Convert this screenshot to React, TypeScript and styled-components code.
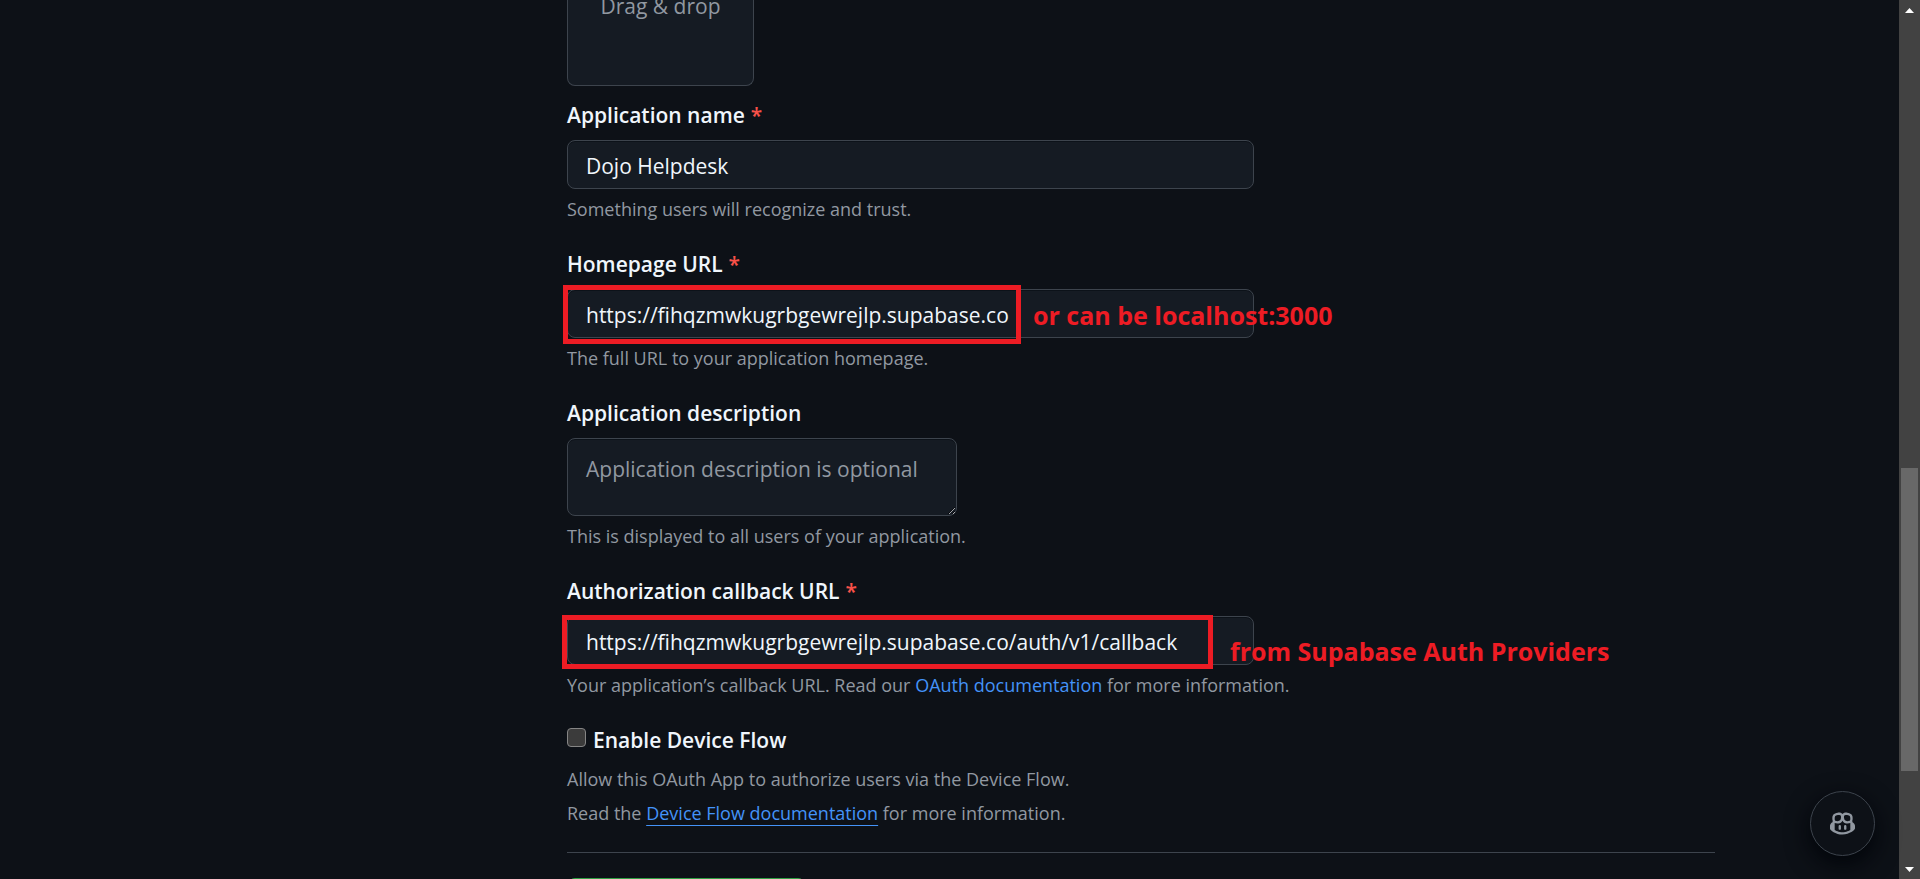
import React from "react";
import styled, { createGlobalStyle, css } from "styled-components";

const GlobalStyle = createGlobalStyle`
  *, *::before, *::after { box-sizing: border-box; }
  html, body { margin: 0; background: #0d1117; }
  body { color: #f0f6fc; font-family: "Open Sans", "Noto Sans", sans-serif; font-size: 21px; }
  input, textarea, button { font: inherit; }
`;

const Page = styled.div`
  display: grid;
  grid-template-columns: minmax(0, 1fr) 21px;
  height: 100vh;
  overflow: hidden;
`;

const Main = styled.main`
  min-width: 0;
  overflow: hidden;
  padding: 0 184px 0 567px;
`;

const DropZone = styled.div`
  width: 187px;
  height: 86px;
  border: 1px solid #3d444d;
  border-top: 0;
  border-radius: 0 0 8px 8px;
  background: #151b23;
  color: #9198a1;
  text-align: center;
  line-height: 12px;
`;

const Form = styled.form`
  display: flex;
  flex-direction: column;
  gap: 28px;
  padding-top: 14px;
`;

const Field = styled.div`
  display: flex;
  flex-direction: column;
  align-items: flex-start;
`;

const Label = styled.label`
  font-weight: 600;
  line-height: 30px;
  margin-bottom: 10px;
`;

const Required = styled.span`
  color: #f85149;
  margin-left: 6px;
`;

const control = css`
  display: block;
  border: 1px solid #3d444d;
  border-radius: 8px;
  background: #151b23;
  color: #f0f6fc;
  outline: none;
  box-shadow: inset 0 1px 0 #01040966;
  padding: 0 18px;
  &::placeholder { color: #9198a1; opacity: 1; }
`;

const ControlRow = styled.div`
  position: relative;
  width: 100%;
  max-width: 687px;
`;

const TextInput = styled.input`
  ${control}
  width: 100%;
  height: 49px;
  padding-top: 2px;
`;

const TextArea = styled.textarea`
  ${control}
  color-scheme: dark;
  width: 390px;
  max-width: 100%;
  height: 78px;
  padding-top: 15px;
  line-height: 30px;
  resize: both;
`;

const Note = styled.p`
  margin: 8px 0 0;
  color: #9198a1;
  font-size: 18px;
  line-height: 24px;
`;

const Link = styled.a<{ $underlined?: boolean }>`
  color: #4493f8;
  text-decoration: ${(p) => (p.$underlined ? "underline" : "none")};
  text-decoration-thickness: 1px;
  text-underline-offset: 5px;
`;

const Highlight = styled.div<{ $left: number; $width: number; $offset: number; $height: number }>`
  position: absolute;
  left: ${(p) => p.$left}px;
  top: ${(p) => p.$offset}px;
  width: ${(p) => p.$width}px;
  height: ${(p) => p.$height}px;
  border: 5px solid #ed1c24;
  pointer-events: none;
`;

const Remark = styled.span<{ $left: number; $top: number }>`
  position: absolute;
  left: ${(p) => p.$left}px;
  top: ${(p) => p.$top}px;
  color: #ed1c24;
  font-size: 25px;
  font-weight: 700;
  line-height: 34px;
  white-space: nowrap;
  pointer-events: none;
`;

const CheckLabel = styled.label`
  display: flex;
  gap: 7px;
  font-weight: 600;
  line-height: 30px;
`;

const Checkbox = styled.input`
  appearance: none;
  width: 19px;
  height: 19px;
  margin: 3px 0 0;
  border: 1px solid #858585;
  border-radius: 4px;
  background: #3b3b3b;
`;

const FlowNote = styled(Note)`
  margin-top: 7px;
  line-height: 34px;
`;

const Divider = styled.hr`
  height: 1px;
  margin: 22px 0 25px;
  border: 0;
  background: #3d444d;
`;

const Submit = styled.button`
  display: block;
  height: 40px;
  padding: 0 18px;
  border: 1px solid #2ea043;
  border-radius: 8px;
  background: #238636;
  color: #ffffff;
  font-weight: 600;
`;

const CopilotButton = styled.button`
  position: fixed;
  right: 45px;
  bottom: 23px;
  display: grid;
  place-items: center;
  width: 65px;
  height: 65px;
  padding: 0;
  border: 1px solid #3d444d;
  border-radius: 50%;
  background: #0d1117;
  color: #9198a1;
  box-shadow: 0 8px 24px #010409;
`;

const ScrollTrack = styled.div`
  display: grid;
  grid-template-rows: 20px minmax(0, 448fr) minmax(0, 303fr) minmax(0, 88fr) 20px;
  justify-items: center;
  align-items: center;
  background: #424242;
`;

const ScrollThumb = styled.div`
  grid-row: 3;
  width: 17px;
  height: 100%;
  background: #686868;
`;

const Arrow = styled.svg<{ $row: number }>`
  grid-row: ${(p) => p.$row};
  display: block;
`;

export default function App() {
  return (
    <>
      <GlobalStyle />
      <Page>
        <Main>
          <DropZone>Drag &amp; drop</DropZone>
          <Form onSubmit={(e) => e.preventDefault()}>
            <Field>
              <Label htmlFor="name">
                Application name<Required>*</Required>
              </Label>
              <ControlRow>
                <TextInput id="name" type="text" defaultValue="Dojo Helpdesk" />
              </ControlRow>
              <Note>Something users will recognize and trust.</Note>
            </Field>

            <Field>
              <Label htmlFor="homepage">
                Homepage URL<Required>*</Required>
              </Label>
              <ControlRow>
                <TextInput id="homepage" type="text" defaultValue="https://fihqzmwkugrbgewrejlp.supabase.co" />
                <Highlight $left={-4} $width={458} $height={59} $offset={-4} />
                <Remark $left={466} $top={9}>or can be localhost:3000</Remark>
              </ControlRow>
              <Note>The full URL to your application homepage.</Note>
            </Field>

            <Field>
              <Label htmlFor="description">Application description</Label>
              <TextArea id="description" placeholder="Application description is optional" />
              <Note>This is displayed to all users of your application.</Note>
            </Field>

            <Field>
              <Label htmlFor="callback">
                Authorization callback URL<Required>*</Required>
              </Label>
              <ControlRow>
                <TextInput
                  id="callback"
                  type="text"
                  defaultValue="https://fihqzmwkugrbgewrejlp.supabase.co/auth/v1/callback"
                />
                <Highlight $left={-5} $width={651} $height={54} $offset={-1} />
                <Remark $left={663} $top={18}>from Supabase Auth Providers</Remark>
              </ControlRow>
              <Note>
                Your application’s callback URL. Read our <Link href="#oauth">OAuth documentation</Link> for more
                information.
              </Note>
            </Field>

            <div>
              <CheckLabel htmlFor="device-flow">
                <Checkbox id="device-flow" type="checkbox" />
                Enable Device Flow
              </CheckLabel>
              <FlowNote>
                Allow this OAuth App to authorize users via the Device Flow.
                <br />
                Read the{" "}
                <Link href="#device-flow-docs" $underlined>
                  Device Flow documentation
                </Link>{" "}
                for more information.
              </FlowNote>
              <Divider />
              <Submit type="submit">Register application</Submit>
            </div>
          </Form>
        </Main>
        <ScrollTrack>
          <Arrow $row={1} width="9" height="5" viewBox="0 0 9 5">
            <path d="M4.5 0L9 5H0z" fill="#fff" />
          </Arrow>
          <ScrollThumb />
          <Arrow $row={5} width="9" height="5" viewBox="0 0 9 5">
            <path d="M4.5 5L9 0H0z" fill="#fff" />
          </Arrow>
        </ScrollTrack>
      </Page>
      <CopilotButton type="button" aria-label="Open Copilot">
        <svg width="25" height="25" viewBox="0 0 16 16" fill="currentColor">
          <path d="M7.998 15.035c-4.562 0-7.873-2.914-7.998-3.749V9.338c.085-.628.677-1.686 1.588-2.065.013-.07.024-.143.036-.218.029-.183.06-.384.126-.612-.201-.508-.254-1.084-.254-1.656 0-.87.128-1.769.693-2.484.579-.733 1.494-1.124 2.724-1.261 1.206-.134 2.262.034 2.944.765.05.053.096.108.139.165.044-.057.094-.112.143-.165.682-.731 1.738-.899 2.944-.765 1.23.137 2.145.528 2.724 1.261.566.715.693 1.614.693 2.484 0 .572-.053 1.148-.254 1.656.066.228.098.429.126.612.012.076.024.148.037.218.924.385 1.522 1.471 1.591 2.095v1.872c0 .766-3.351 3.795-8.002 3.795Zm0-1.485c2.28 0 4.584-1.11 5.002-1.433V7.862l-.023-.116c-.49.21-1.075.291-1.727.291-1.146 0-2.059-.327-2.71-.991A3.222 3.222 0 0 1 8 6.303a3.24 3.24 0 0 1-.544.743c-.65.664-1.563.991-2.71.991-.652 0-1.236-.081-1.727-.291l-.023.116v4.255c.419.323 2.722 1.433 5.002 1.433ZM6.762 2.83c-.193-.206-.637-.413-1.682-.297-1.019.113-1.479.404-1.713.7-.247.312-.369.789-.369 1.554 0 .793.129 1.171.308 1.371.162.181.519.379 1.442.379.853 0 1.339-.235 1.638-.54.315-.322.527-.827.617-1.553.117-.935-.037-1.395-.241-1.614Zm4.155-.297c-1.044-.116-1.488.091-1.681.297-.204.219-.359.679-.242 1.614.091.726.303 1.231.618 1.553.299.305.784.54 1.638.54.922 0 1.28-.198 1.442-.379.179-.2.308-.578.308-1.371 0-.765-.123-1.242-.37-1.554-.233-.296-.693-.587-1.713-.7Z" />
          <path d="M6.25 9.037a.75.75 0 0 1 .75.75v1.501a.75.75 0 0 1-1.5 0V9.787a.75.75 0 0 1 .75-.75Zm4.25.75v1.501a.75.75 0 0 1-1.5 0V9.787a.75.75 0 0 1 1.5 0Z" />
        </svg>
      </CopilotButton>
    </>
  );
}
